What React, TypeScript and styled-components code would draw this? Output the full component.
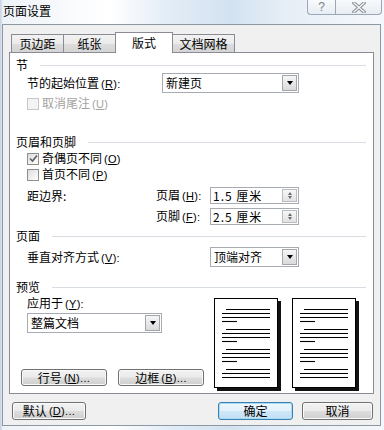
import React from 'react';
import styled, { createGlobalStyle } from 'styled-components';

const GlobalStyle = createGlobalStyle`
  html, body {
    margin: 0;
    padding: 0;
    background: #ffffff;
  }
  body {
    font-family: "Noto Sans CJK SC", "Noto Sans", sans-serif;
    font-size: 12px;
    color: #000;
  }
  * {
    box-sizing: border-box;
  }
`;

const Window = styled.div`
  width: 384px;
  height: 430px;
  overflow: hidden;
  background: linear-gradient(
    90deg,
    #c3d1e0 0px,
    #eef3f8 3px,
    #ffffff 110px,
    #e2ecf6 170px,
    #d3e2f1 230px,
    #e6eef7 285px,
    #f5f8fb 384px
  );
`;

const TitleBar = styled.div`
  height: 24px;
  display: flex;
  align-items: flex-start;
  justify-content: space-between;
  padding-left: 3px;
`;

const Title = styled.div`
  margin-top: 3px;
  line-height: 15px;
  font-size: 12px;
`;

const Caption = styled.div`
  display: flex;
  margin-right: 2px;
`;

const CaptionButton = styled.div<{ $w: number; $side: 'left' | 'right' }>`
  width: ${({ $w }) => $w}px;
  height: 15px;
  display: flex;
  align-items: center;
  justify-content: center;
  border: 1px solid #9ba7b6;
  border-top: none;
  ${({ $side }) => ($side === 'left' ? 'border-right: none;' : '')}
  border-radius: ${({ $side }) => ($side === 'left' ? '0 0 0 4px' : '0 0 4px 0')};
  background: linear-gradient(#f8fafc, #e7edf3);
  color: #7a7f86;
  font-family: "Liberation Sans", sans-serif;
  font-size: 12px;
  line-height: 1;
`;

const Client = styled.div`
  margin: 0 3px 0 2px;
  height: 402px;
  border: 1px solid #8d98a5;
  background: #f0f0f0;
  padding: 7px 0 0 6px;
`;

const TabStrip = styled.div`
  height: 20px;
  display: flex;
  align-items: flex-end;
  padding-left: 2px;
`;

const Tab = styled.div<{ $w: number; $active?: boolean; $first?: boolean }>`
  width: ${({ $w }) => $w}px;
  height: ${({ $active }) => ($active ? 21 : 18)}px;
  margin-left: ${({ $first }) => ($first ? 0 : -1)}px;
  margin-bottom: ${({ $active }) => ($active ? -1 : 0)}px;
  position: relative;
  z-index: ${({ $active }) => ($active ? 2 : 1)};
  border: 1px solid #898c95;
  border-bottom: none;
  background: ${({ $active }) =>
    $active ? '#ffffff' : 'linear-gradient(#f2f2f2 0%, #ebebeb 50%, #dddddd 51%, #d4d4d4 100%)'};
  display: flex;
  align-items: center;
  justify-content: center;
  padding-top: ${({ $active }) => ($active ? 0 : 1)}px;
  line-height: 14px;
`;

const Panel = styled.div`
  width: 365px;
  height: 342px;
  border: 1px solid #898c95;
  background: #ffffff;
  padding: 0 7px 0 6px;
`;

const GroupHead = styled.div<{ $mt: number }>`
  display: flex;
  align-items: center;
  gap: 12px;
  height: 12px;
  line-height: 12px;
  margin-top: ${({ $mt }) => $mt}px;

  &::after {
    content: '';
    flex: 1;
    height: 1px;
    background: #d8dde3;
  }
`;

const FieldRow = styled.div<{ $mt: number; $h: number }>`
  display: flex;
  align-items: center;
  height: ${({ $h }) => $h}px;
  margin-top: ${({ $mt }) => $mt}px;
  padding-left: 11px;
`;

const Label = styled.span<{ $w?: number; $muted?: boolean }>`
  ${({ $w }) => ($w ? `width: ${$w}px; flex: none;` : '')}
  color: ${({ $muted }) => ($muted ? '#a3a3a3' : '#000')};
  line-height: 14px;
  white-space: nowrap;
`;

const Key = styled.span`
  font-family: "Liberation Sans", sans-serif;
  font-size: 11px;
  margin-left: 2px;
  letter-spacing: 0.3px;

  u {
    text-decoration: underline;
    text-underline-offset: 1px;
  }
`;

const CheckBox = styled.span<{ $disabled?: boolean }>`
  width: 12px;
  height: 12px;
  flex: none;
  margin-right: 3px;
  border: 1px solid ${({ $disabled }) => ($disabled ? '#c8c8c8' : '#8e8f8f')};
  background: ${({ $disabled }) =>
    $disabled ? '#f4f4f4' : 'linear-gradient(135deg, #dcdcdc 0%, #f2f2f2 60%, #ffffff 100%)'};
  display: flex;
  align-items: center;
  justify-content: center;
`;

const SelectBox = styled.div<{ $w: number }>`
  width: ${({ $w }) => $w}px;
  height: 20px;
  flex: none;
  border: 1px solid #a7abb2;
  background: #ffffff;
  display: flex;
  align-items: center;
  padding: 1px;
`;

const SelectText = styled.span`
  flex: 1;
  padding-left: 2px;
  line-height: 16px;
`;

const DropButton = styled.span`
  width: 15px;
  height: 16px;
  border: 1px solid #a3a6ad;
  background: linear-gradient(#f6f6f6, #dadada);
  display: flex;
  align-items: center;
  justify-content: center;

  &::after {
    content: '';
    border-left: 3.5px solid transparent;
    border-right: 3.5px solid transparent;
    border-top: 4px solid #000;
  }
`;

const SpinGrid = styled.div`
  display: grid;
  grid-template-columns: 129px 54px 89px;
  grid-template-rows: 17px 17px;
  row-gap: 4px;
  align-items: center;
  margin-top: 6px;
  padding-left: 11px;
`;

const SpinBox = styled.div`
  height: 17px;
  border: 1px solid #a7abb2;
  background: #ffffff;
  display: flex;
  align-items: center;
  padding: 1px;
`;

const SpinText = styled.span`
  flex: 1;
  padding-left: 1px;
  line-height: 14px;
  letter-spacing: 1px;
`;

const SpinButtons = styled.span`
  width: 15px;
  height: 13px;
  border: 1px solid #b9bcc2;
  background: linear-gradient(#f7f7f7, #e2e2e2);
  display: flex;
  flex-direction: column;
  align-items: center;
  justify-content: space-evenly;
`;

const SpinArrow = styled.span<{ $up?: boolean }>`
  width: 0;
  height: 0;
  border-left: 2.5px solid transparent;
  border-right: 2.5px solid transparent;
  ${({ $up }) => ($up ? 'border-bottom: 3px solid #6b6b6b;' : 'border-top: 3px solid #6b6b6b;')}
`;

const PreviewBody = styled.div`
  display: flex;
  padding-left: 5px;
`;

const PreviewLeft = styled.div`
  width: 193px;
  display: flex;
  flex-direction: column;
`;

const ApplyLabel = styled.div`
  margin: 4px 0 0 6px;
  height: 12px;
  line-height: 12px;
`;

const ApplySelect = styled.div`
  margin: 4px 0 0 6px;
`;

const ButtonRow = styled.div<{ $mt: number }>`
  display: flex;
  gap: 11px;
  margin-top: ${({ $mt }) => $mt}px;
`;

const Button = styled.button<{ $w: number; $h: number; $primary?: boolean }>`
  width: ${({ $w }) => $w}px;
  height: ${({ $h }) => $h}px;
  padding: 0;
  border: 1px solid ${({ $primary }) => ($primary ? '#3c7fb1' : '#707070')};
  border-radius: 3px;
  background: ${({ $primary }) =>
    $primary
      ? 'linear-gradient(#eef7fd 0%, #e2f1fb 48%, #cfe7f7 52%, #c2e0f5 100%)'
      : 'linear-gradient(#f2f2f2 0%, #ebebeb 48%, #dddddd 52%, #cfcfcf 100%)'};
  box-shadow: ${({ $primary }) => ($primary ? 'inset 0 0 0 1px #a6dcf5' : 'inset 0 0 0 1px #fafafa')};
  font-family: inherit;
  font-size: 12px;
  line-height: 12px;
  color: #000;
  display: flex;
  align-items: center;
  justify-content: center;
`;

const Pages = styled.div`
  display: flex;
  gap: 14px;
  margin-top: 5px;
`;

const PageSheet = styled.div`
  width: 64px;
  height: 90px;
  border: 1px solid #000;
  background: #ffffff;
  box-shadow: 3px 3px 0 #111;
`;

const Footer = styled.div`
  display: flex;
  justify-content: space-between;
  margin-top: 8px;
  padding: 0 7px 0 3px;
`;

const FooterRight = styled.div`
  display: flex;
  gap: 9px;
`;

function Mn({ k }: { k: string }) {
  return (
    <Key>
      (<u>{k}</u>):
    </Key>
  );
}

function MnDots({ k }: { k: string }) {
  return (
    <Key>
      (<u>{k}</u>)...
    </Key>
  );
}

function Select({ value, width }: { value: string; width: number }) {
  return (
    <SelectBox $w={width}>
      <SelectText>{value}</SelectText>
      <DropButton />
    </SelectBox>
  );
}

function Spinner({ value }: { value: string }) {
  return (
    <SpinBox>
      <SpinText>{value}</SpinText>
      <SpinButtons>
        <SpinArrow $up />
        <SpinArrow />
      </SpinButtons>
    </SpinBox>
  );
}

function Tick() {
  return (
    <svg width="9" height="9" viewBox="0 0 9 9">
      <path d="M1 4.5 L3.5 7 L8 1.5" fill="none" stroke="#5c5c5c" strokeWidth="1.6" />
    </svg>
  );
}

const lineRows = [
  { y: 10, x1: 11 },
  { y: 14, x1: 7 },
  { y: 18, x1: 7 },
  { y: 22, x1: 7, short: true },
  { y: 30, x1: 11 },
  { y: 34, x1: 7 },
  { y: 38, x1: 7 },
  { y: 42, x1: 7, short: true },
  { y: 50, x1: 11 },
  { y: 54, x1: 7 },
  { y: 58, x1: 7 },
  { y: 62, x1: 7, short: true },
  { y: 70, x1: 11 },
  { y: 74, x1: 7 },
  { y: 78, x1: 7 },
];

function PagePreview() {
  return (
    <PageSheet>
      <svg width="62" height="88" viewBox="0 0 62 88">
        {lineRows.map((l) => (
          <line key={l.y} x1={l.x1} x2={l.short ? 22 : 55} y1={l.y + 0.5} y2={l.y + 0.5} stroke="#000" strokeWidth="1.1" />
        ))}
      </svg>
    </PageSheet>
  );
}

export default function App() {
  return (
    <>
      <GlobalStyle />
      <Window>
        <TitleBar>
          <Title>页面设置</Title>
          <Caption>
            <CaptionButton $w={28} $side="left">?</CaptionButton>
            <CaptionButton $w={47} $side="right">
              <svg width="14" height="11" viewBox="0 0 14 11">
                <path d="M2 1 L12 10 M12 1 L2 10" stroke="#8a8f96" strokeWidth="3.4" strokeLinecap="square" />
                <path d="M2 1 L12 10 M12 1 L2 10" stroke="#f4f6f8" strokeWidth="1.4" strokeLinecap="square" />
              </svg>
            </CaptionButton>
          </Caption>
        </TitleBar>

        <Client>
          <TabStrip>
            <Tab $w={53} $first>页边距</Tab>
            <Tab $w={53}>纸张</Tab>
            <Tab $w={58} $active>版式</Tab>
            <Tab $w={63}>文档网格</Tab>
          </TabStrip>

          <Panel>
            <GroupHead $mt={6}>节</GroupHead>
            <FieldRow $mt={2} $h={20}>
              <Label $w={135}>
                节的起始位置<Mn k="R" />
              </Label>
              <Select value="新建页" width={137} />
            </FieldRow>
            <FieldRow $mt={4} $h={13}>
              <CheckBox $disabled />
              <Label $muted>
                取消尾注<Key>(<u>U</u>)</Key>
              </Label>
            </FieldRow>

            <GroupHead $mt={26}>页眉和页脚</GroupHead>
            <FieldRow $mt={4} $h={13}>
              <CheckBox>
                <Tick />
              </CheckBox>
              <Label>
                奇偶页不同<Key>(<u>O</u>)</Key>
              </Label>
            </FieldRow>
            <FieldRow $mt={3} $h={13}>
              <CheckBox />
              <Label>
                首页不同<Key>(<u>P</u>)</Key>
              </Label>
            </FieldRow>
            <SpinGrid>
              <Label>距边界:</Label>
              <Label>
                页眉<Mn k="H" />
              </Label>
              <Spinner value="1.5 厘米" />
              <span />
              <Label>
                页脚<Mn k="F" />
              </Label>
              <Spinner value="2.5 厘米" />
            </SpinGrid>

            <GroupHead $mt={5}>页面</GroupHead>
            <FieldRow $mt={5} $h={20}>
              <Label $w={183}>
                垂直对齐方式<Mn k="V" />
              </Label>
              <Select value="顶端对齐" width={89} />
            </FieldRow>

            <GroupHead $mt={14}>预览</GroupHead>
            <PreviewBody>
              <PreviewLeft>
                <ApplyLabel>
                  应用于<Mn k="Y" />
                </ApplyLabel>
                <ApplySelect>
                  <Select value="整篇文档" width={135} />
                </ApplySelect>
                <ButtonRow $mt={36}>
                  <Button $w={86} $h={17}>
                    行号<MnDots k="N" />
                  </Button>
                  <Button $w={86} $h={17}>
                    边框<MnDots k="B" />
                  </Button>
                </ButtonRow>
              </PreviewLeft>
              <Pages>
                <PagePreview />
                <PagePreview />
              </Pages>
            </PreviewBody>
          </Panel>

          <Footer>
            <Button $w={74} $h={18}>
              默认<MnDots k="D" />
            </Button>
            <FooterRight>
              <Button $w={75} $h={18} $primary>
                确定
              </Button>
              <Button $w={71} $h={18}>
                取消
              </Button>
            </FooterRight>
          </Footer>
        </Client>
      </Window>
    </>
  );
}
